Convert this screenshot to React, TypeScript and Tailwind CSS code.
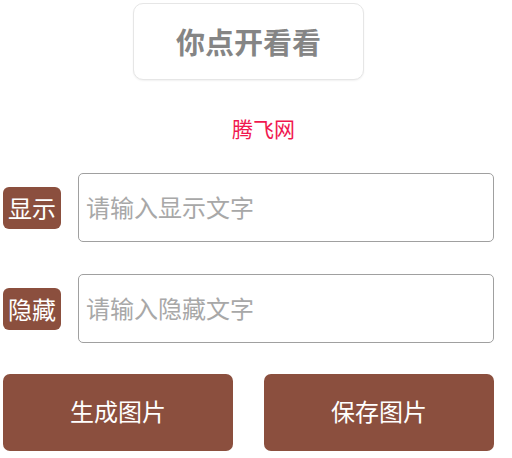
import React from "react";

const font = { fontFamily: '"Noto Sans CJK SC", "Noto Sans", sans-serif' };

function Row({ label, placeholder }: { label: string; placeholder: string }) {
  return (
    <div className="flex items-center pl-[3px] pr-[18px]">
      <div className="flex h-[42px] w-[58px] shrink-0 items-center justify-center rounded-[6px] bg-[#8b4f3e] text-[24px] leading-none text-white">
        {label}
      </div>
      <input
        className="ml-[17px] h-[69px] flex-1 rounded-[5px] border border-[#a0a0a0] bg-white px-[7px] pb-[3px] text-[24px] text-[#333] outline-none placeholder:text-[#a8a8a8]"
        style={font}
        placeholder={placeholder}
      />
    </div>
  );
}

export default function App() {
  return (
    <div className="h-[458px] w-[512px] bg-white" style={font}>
      <div className="pt-[3px]">
        <div className="ml-[133px] flex h-[77px] w-[231px] items-center justify-center rounded-[10px] border border-[#e6e6e6] bg-white shadow-[0_1px_2px_rgba(0,0,0,0.06)]">
          <span className="text-[29px] font-bold leading-none text-[#858585]">你点开看看</span>
        </div>
      </div>
      <div className="mt-[36px] flex h-[24px] items-center pl-[232px] text-[21px] leading-none text-[#f0184f]">
        腾飞网
      </div>
      <div className="mt-[33px]">
        <Row label="显示" placeholder="请输入显示文字" />
      </div>
      <div className="mt-[32px]">
        <Row label="隐藏" placeholder="请输入隐藏文字" />
      </div>
      <div className="mt-[31px] flex gap-[31px] pl-[3px] pr-[18px]">
        <button className="flex h-[77px] flex-1 items-center justify-center rounded-[7px] bg-[#8b4f3e] pb-[3px] text-[24px] text-white">
          生成图片
        </button>
        <button className="flex h-[77px] flex-1 items-center justify-center rounded-[7px] bg-[#8b4f3e] pb-[3px] text-[24px] text-white">
          保存图片
        </button>
      </div>
    </div>
  );
}
